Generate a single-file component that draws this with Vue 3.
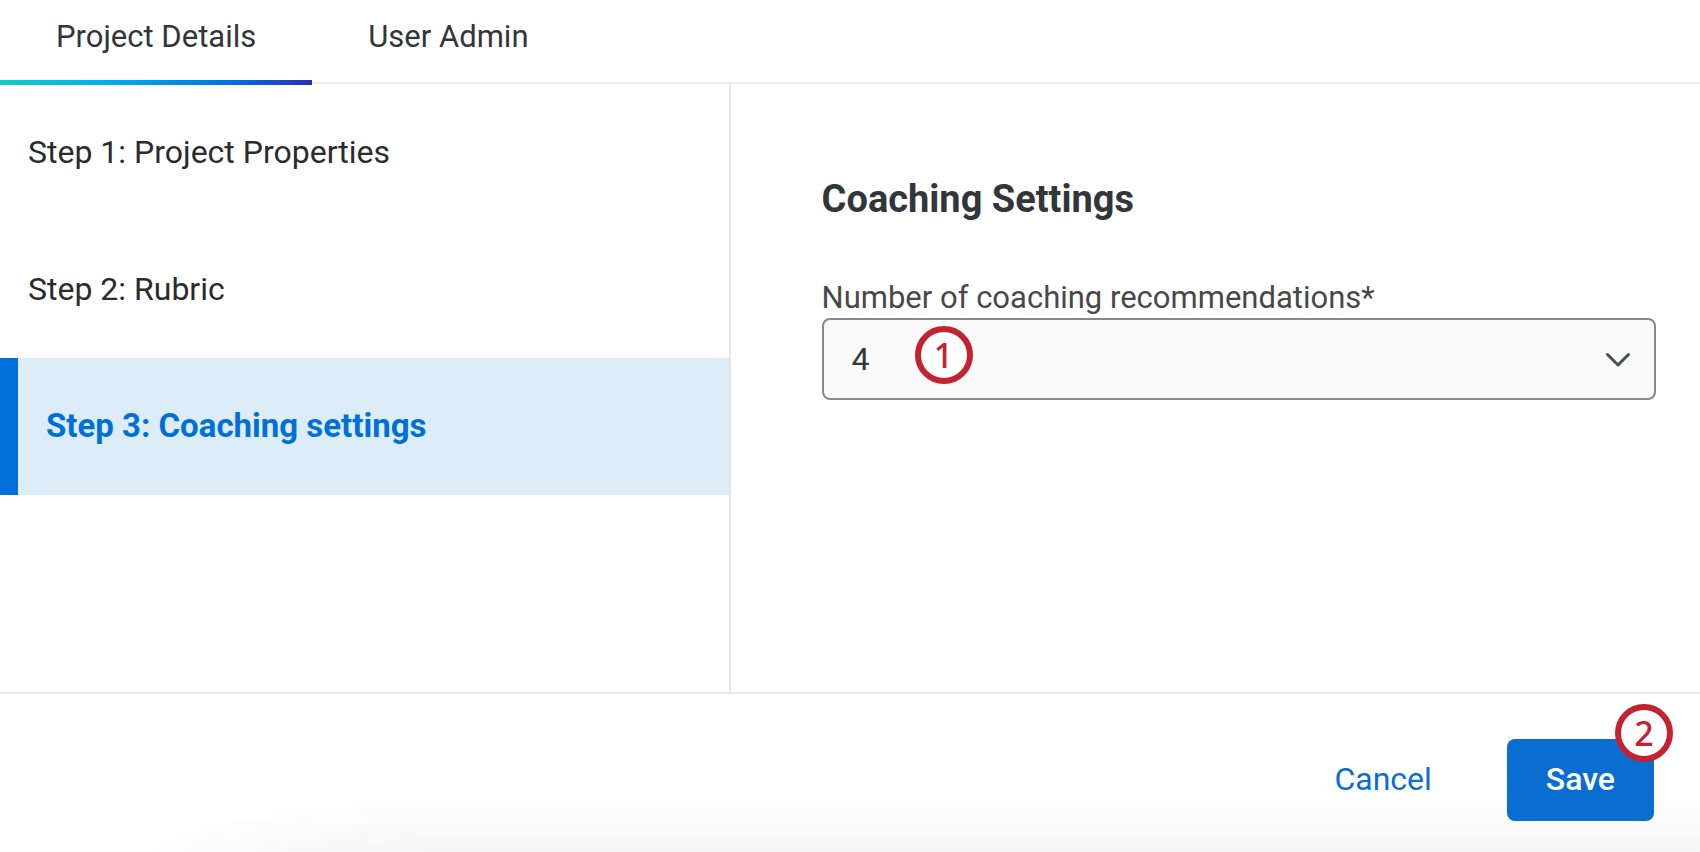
<script setup>
import {ref} from "vue";

const tabs = ['Project Details', 'User Admin']
const steps = [
  'Step 1: Project Properties',
  'Step 2: Rubric',
  'Step 3: Coaching settings'
]
const counts = [1, 2, 3, 4, 5]

const activeTab = ref(0)
const activeStep = ref(2)
const recommendations = ref(4)
</script>

<template>
  <div class="project">
    <nav class="tabs">
      <button
        v-for="(tab, index) in tabs"
        :key="tab"
        type="button"
        :class="['tabs__item', {tabs__item_active: index === activeTab}]"
        @click="activeTab = index"
      >{{ tab }}</button>
    </nav>

    <div class="project__body">
      <aside class="steps">
        <button
          v-for="(step, index) in steps"
          :key="step"
          type="button"
          :class="['steps__item', {steps__item_active: index === activeStep}]"
          @click="activeStep = index"
        >{{ step }}</button>
      </aside>

      <main class="settings">
        <h1 class="settings__title">Coaching Settings</h1>
        <label class="settings__label" for="recommendations">Number of coaching recommendations*</label>
        <div class="settings__field">
          <select id="recommendations" v-model="recommendations" class="settings__select">
            <option v-for="count in counts" :key="count" :value="count">{{ count }}</option>
          </select>
          <svg class="settings__arrow" viewBox="0 0 26 16" aria-hidden="true">
            <path d="M2.5 2.5 L13 13 L23.5 2.5" fill="none" stroke="#4a4d52" stroke-width="3" stroke-linecap="round" stroke-linejoin="round" />
          </svg>
          <span class="badge badge_select">1</span>
        </div>
      </main>
    </div>

    <footer class="actions">
      <button type="button" class="actions__cancel">Cancel</button>
      <div class="actions__wrap">
        <button type="button" class="actions__save">Save</button>
        <span class="badge badge_save">2</span>
      </div>
    </footer>
  </div>
</template>

<style>
body {
  margin: 0;
  background: #fff;
}
</style>

<style scoped>
.project {
  display: flex;
  flex-direction: column;
  min-height: 100vh;
  font-family: Roboto, "Liberation Sans", sans-serif;
  font-size: 32px;
  line-height: 40px;
  color: #32363a;
}

button,
select {
  margin: 0;
  border: 0;
  font: inherit;
  cursor: pointer;
}

.tabs {
  display: flex;
  height: 82px;
  border-bottom: 2px solid #ededed;
}

.tabs__item {
  height: 85px;
  padding: 0 56px 6px;
  border-bottom: 5px solid transparent;
  background: none;
  color: #32363a;
  font-size: 31px;
}

.tabs__item_active {
  border-image: linear-gradient(to right, #12cdc6, #00aeef 35%, #0070e0 75%, #2a2db4) 1;
}

.project__body {
  display: grid;
  grid-template-columns: 3fr 4fr;
  flex: 1;
}

.steps {
  display: flex;
  flex-direction: column;
}

.steps__item {
  height: 137px;
  padding: 0 28px 2px;
  background: none;
  color: #2b2b2b;
  text-align: left;
}

.steps__item_active {
  border-left: 18px solid #0070d8;
  background: #ddedf8;
  color: #0070d8;
  font-size: 33px;
  font-weight: 700;
}

.settings {
  padding: 93px 44px 40px 91px;
  border-left: 2px solid #e5e5e5;
}

.settings__title {
  margin: 0 0 57px;
  font-size: 38px;
  line-height: 44px;
  font-weight: 700;
}

.settings__label {
  display: block;
  color: #484848;
  font-size: 31px;
}

.settings__field {
  position: relative;
}

.settings__select {
  display: block;
  width: 100%;
  height: 82px;
  padding: 0 72px 0 28px;
  border: 2px solid #898989;
  border-radius: 8px;
  background: #fafafa;
  color: #32363a;
  appearance: none;
}

.settings__arrow {
  position: absolute;
  top: 34px;
  right: 25px;
  width: 26px;
  height: 16px;
  pointer-events: none;
}

.badge {
  position: absolute;
  box-sizing: border-box;
  width: 58px;
  height: 58px;
  border: 6px solid #c32230;
  border-radius: 50%;
  background: #fff;
  color: #c32230;
  font-family: "Noto Sans", sans-serif;
  font-size: 34px;
  font-weight: 500;
  line-height: 46px;
  text-align: center;
  pointer-events: none;
}

.badge_select {
  top: 8px;
  left: 93px;
}

.badge_save {
  top: -35px;
  right: -19px;
}

.actions {
  display: flex;
  justify-content: flex-end;
  align-items: center;
  gap: 36px;
  padding: 45px 46px 31px;
  border-top: 2px solid #e9e9e9;
  background:
    linear-gradient(to right, #fff 100px, transparent 440px),
    linear-gradient(to top, #f5f5f5, #fcfcfc 36px, #fff 76px);
}

.actions__wrap {
  position: relative;
}

.actions__cancel,
.actions__save {
  display: block;
  height: 82px;
  padding: 0 39px 2px;
  border-radius: 8px;
}

.actions__cancel {
  background: none;
  color: #0a6ed1;
}

.actions__save {
  background: #0a6ed1;
  color: #fff;
  font-weight: 500;
}
</style>
